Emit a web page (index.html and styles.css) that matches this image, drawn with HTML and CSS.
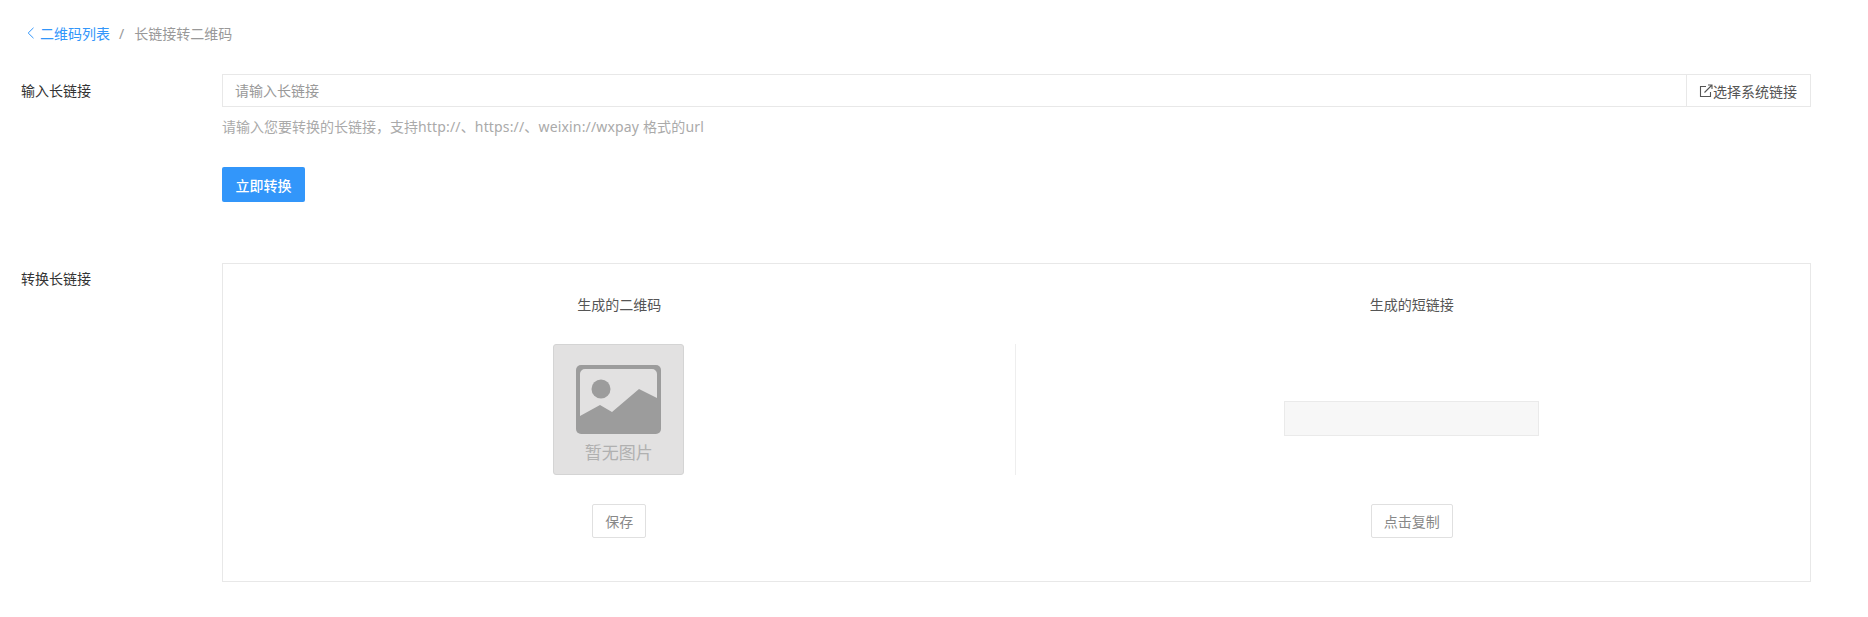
FILE: index.html
```html
<!DOCTYPE html>
<html lang="zh-CN">
<head>
    <meta charset="UTF-8">
    <title>长链接转二维码</title>
    <link rel="stylesheet" href="styles.css">
</head>
<body>
    <div class="breadcrumb">
        <svg class="back-icon" width="8" height="12" viewBox="0 0 8 12"><path d="M6.5 .8 1.2 6l5.3 5.2" fill="none" stroke="#3296fa" stroke-width="1"/></svg>
        <a class="crumb-link" href="#">二维码列表</a>
        <span class="crumb-sep">/</span>
        <span class="crumb-current">长链接转二维码</span>
    </div>

    <div class="form-row">
        <label class="form-label">输入长链接</label>
        <div class="form-body">
            <div class="input-group">
                <div class="input-text">请输入长链接</div>
                <div class="input-addon">
                    <svg width="14" height="14" viewBox="0 0 14 14"><path d="M7 2.5H1.5v10h10V8M5.5 8.5 12.5 1.5M9 1h4v4" fill="none" stroke="#555" stroke-width="1.1"/></svg>
                    <span>选择系统链接</span>
                </div>
            </div>
            <p class="help-text">请输入您要转换的长链接，支持<span class="help-urls">http://、https://、weixin://wxpay 格式的url</span></p>
            <button class="btn-primary">立即转换</button>
        </div>
    </div>

    <div class="form-row result-row">
        <label class="form-label">转换长链接</label>
        <div class="result-card">
            <div class="result-col">
                <div class="result-title">生成的二维码</div>
                <div class="result-main result-main-left">
                    <div class="no-image">
                        <svg width="85" height="69" viewBox="0 0 85 69">
                            <rect width="85" height="69" rx="5" fill="#9c9c9c"/>
                            <path d="M4 51V9a5 5 0 0 1 5-5h67a5 5 0 0 1 5 5v24L63 24 36 47 24 40Z" fill="#e2e1e1"/>
                            <circle cx="25" cy="24" r="9.5" fill="#9c9c9c"/>
                        </svg>
                        <span class="no-image-text">暂无图片</span>
                    </div>
                </div>
                <button class="btn-plain">保存</button>
            </div>
            <div class="result-col">
                <div class="result-title">生成的短链接</div>
                <div class="result-main">
                    <div class="short-link"></div>
                </div>
                <button class="btn-plain">点击复制</button>
            </div>
        </div>
    </div>
</body>
</html>
```

FILE: styles.css
```css
body {
    margin: 0;
    padding: 0 57px 0 21px;
    font-family: "Noto Sans", "Noto Sans CJK SC", sans-serif;
    font-size: 14px;
    color: #333;
    background-color: #fff;
}
.breadcrumb {
    display: flex;
    align-items: center;
    height: 20px;
    padding: 23px 0 0 6px;
    color: #999;
}
.back-icon {
    margin-right: 5px;
}
.crumb-link {
    color: #3296fa;
    text-decoration: none;
}
.crumb-sep {
    margin: 0 10px 0 9px;
}
.form-row {
    display: flex;
    margin-top: 31px;
}
.form-label {
    width: 201px;
    flex-shrink: 0;
    line-height: 33px;
    color: #333;
}
.form-body {
    flex: 1;
}
.input-group {
    display: flex;
    height: 33px;
    box-sizing: border-box;
    border: 1px solid #e8e8e8;
}
.input-text {
    flex: 1;
    padding-left: 12px;
    line-height: 31px;
    color: #999;
}
.input-addon {
    display: flex;
    align-items: center;
    width: 124px;
    padding-left: 12px;
    box-sizing: border-box;
    border-left: 1px solid #e8e8e8;
    color: #555;
}
.help-text {
    margin: 8px 0 0;
    line-height: 24px;
    color: #aaa;
}
.help-urls {
    letter-spacing: 0.16px;
}
.btn-primary {
    display: block;
    width: 83px;
    height: 35px;
    margin-top: 28px;
    padding: 0;
    border: none;
    border-radius: 2px;
    background-color: #3296fa;
    color: #fff;
    font-family: inherit;
    font-size: 14px;
    font-weight: 500;
}
.result-row {
    margin-top: 61px;
}
.result-row .form-label {
    line-height: 32px;
}
.result-card {
    display: flex;
    flex: 1;
    height: 319px;
    padding-right: 2px;
    box-sizing: border-box;
    border: 1px solid #e8e8e8;
}
.result-col {
    flex: 1;
    display: flex;
    flex-direction: column;
    align-items: center;
}
.result-title {
    margin-top: 31px;
    line-height: 20px;
    color: #555;
}
.result-main {
    display: flex;
    align-items: center;
    justify-content: center;
    width: 100%;
    height: 131px;
    margin-top: 29px;
    box-sizing: border-box;
}
.result-main-left {
    border-right: 1px solid #eee;
}
.no-image {
    display: flex;
    flex-direction: column;
    align-items: center;
    width: 131px;
    height: 131px;
    padding-top: 20px;
    box-sizing: border-box;
    border: 1px solid #d4d4d4;
    border-radius: 3px;
    background-color: #e2e1e1;
}
.no-image-text {
    margin-top: 7px;
    font-size: 17px;
    line-height: 24px;
    color: #b0b0b0;
}
.short-link {
    width: 255px;
    height: 35px;
    margin-top: 18px;
    box-sizing: border-box;
    border: 1px solid #eaeaea;
    background-color: #f7f7f7;
}
.btn-plain {
    height: 34px;
    margin-top: 29px;
    padding: 0 12px;
    box-sizing: border-box;
    border: 1px solid #e0e0e0;
    border-radius: 2px;
    background-color: #fff;
    color: #888;
    font-family: inherit;
    font-size: 14px;
}
```
